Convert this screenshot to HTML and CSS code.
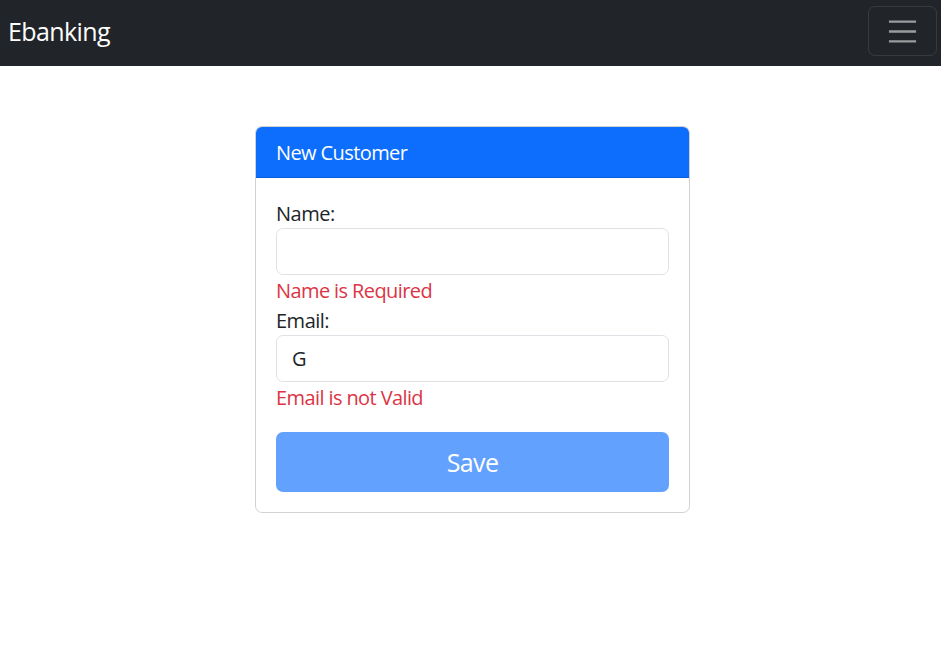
FILE: index.html
```html
<!DOCTYPE html>
<html lang="en">
<head>
<meta charset="utf-8">
<title>Ebanking</title>
<link rel="stylesheet" href="styles.css">
</head>
<body>
<nav class="navbar">
  <a class="brand" href="#">Ebanking</a>
  <button class="toggler" type="button" aria-label="Toggle navigation">
    <svg class="toggler-icon" viewBox="0 0 30 30" width="37" height="37">
      <path stroke="rgba(255,255,255,0.55)" stroke-linecap="butt" stroke-miterlimit="10" stroke-width="2" d="M4 7h22M4 15h22M4 23h22"/>
    </svg>
  </button>
</nav>
<main class="wrap">
  <section class="card">
    <header class="card-header">New Customer</header>
    <form class="card-body">
      <label class="label" for="name">Name:</label>
      <input class="input" id="name" type="text">
      <div class="error">Name is Required</div>
      <label class="label" for="email">Email:</label>
      <input class="input" id="email" type="text" value="G">
      <div class="error">Email is not Valid</div>
      <button class="btn" type="button" disabled>Save</button>
    </form>
  </section>
</main>
</body>
</html>
```
FILE: styles.css
```css
* { box-sizing: border-box; }
html, body { margin: 0; padding: 0; }
body {
  font-family: "Open Sans", "Noto Sans", sans-serif;
  font-size: 20px;
  line-height: 1.5;
  color: #212529;
  background: #fff;
}
.navbar {
  background: #212529;
  height: 66px;
  display: flex;
  align-items: center;
  justify-content: space-between;
  padding: 0 4px 4px 8px;
}
.brand {
  color: #fff;
  text-decoration: none;
  font-size: 25px;
  letter-spacing: -0.6px;
  line-height: 1.5;
  margin-top: 2px;
}
.toggler {
  width: 69px;
  height: 50px;
  background: transparent;
  border: 1px solid rgba(255,255,255,0.1);
  border-radius: 7px;
  display: flex;
  align-items: center;
  justify-content: center;
  padding: 0;
}
.toggler-icon { display: block; }
.wrap {
  display: flex;
  justify-content: center;
  padding: 60px 0 0 4px;
}
.card {
  width: 435px;
  border: 1px solid rgba(0,0,0,0.175);
  border-radius: 7px;
  overflow: hidden;
}
.card-header {
  background: #0d6efd;
  color: #fff;
  padding: 11px 20px 9px;
  line-height: 30px;
  border-bottom: 1px solid #0b5ed7;
  letter-spacing: -0.6px;
}
.card-body {
  padding: 20px;
  display: flex;
  flex-direction: column;
}
.label {
  line-height: 28px;
  padding-top: 2px;
  letter-spacing: -0.5px;
}
.input {
  height: 47px;
  border: 1px solid #dee2e6;
  border-radius: 7px;
  padding: 0 15px;
  font-family: inherit;
  font-size: 20px;
  color: #212529;
  outline: none;
}
.error {
  color: #dc3545;
  line-height: 28px;
  padding-top: 2px;
  letter-spacing: -0.6px;
}
.btn {
  margin-top: 20px;
  height: 60px;
  border: none;
  border-radius: 7px;
  background: #62a1fe;
  color: #fff;
  font-family: inherit;
  font-size: 25px;
  letter-spacing: -0.6px;
}
```
